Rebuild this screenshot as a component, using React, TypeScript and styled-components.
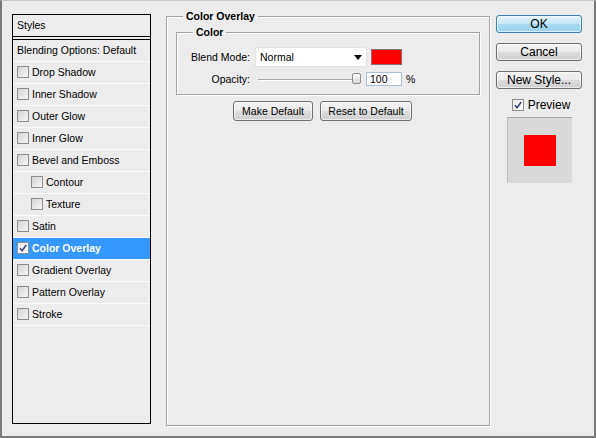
import styled, { createGlobalStyle } from "styled-components";

const GlobalStyle = createGlobalStyle`
  html, body {
    margin: 0;
    padding: 0;
    background: #ececec;
  }
  body {
    font-family: "Liberation Sans", Arial, sans-serif;
    font-size: 10.5px;
    color: #000;
  }
`;

const Window = styled.div`
  box-sizing: border-box;
  width: 596px;
  height: 438px;
  background: #ececec;
  border-top: 1px solid #c9c9c9;
  border-left: 2px solid #7b7b7b;
  border-right: 2px solid #7b7b7b;
  border-bottom: 2px solid #7b7b7b;
  padding: 9px 0 0 10px;
  display: flex;
  align-items: flex-start;
`;

/* ---------- left list ---------- */

const StylesPanel = styled.div`
  box-sizing: border-box;
  margin-top: 4px;
  width: 139px;
  height: 410px;
  border: 1px solid #000;
  display: flex;
  flex-direction: column;
`;

const PanelHeader = styled.div`
  height: 21px;
  line-height: 20px;
  padding-left: 4px;
  border-bottom: 1px solid #000;
`;

const HeaderRule = styled.div`
  height: 2px;
  border-bottom: 1px solid #000;
`;

const Row = styled.div<{ $indent?: boolean; $active?: boolean }>`
  box-sizing: border-box;
  display: flex;
  align-items: center;
  gap: 3px;
  height: 22px;
  padding-left: ${(p) => (p.$indent ? "18px" : "4px")};
  padding-bottom: 1px;
  border-bottom: 1px solid #fbfbfb;
  background: ${(p) => (p.$active ? "#3399ff" : "transparent")};
  color: ${(p) => (p.$active ? "#fff" : "#000")};
  font-weight: ${(p) => (p.$active ? "bold" : "normal")};
  white-space: nowrap;
`;

const Box = styled.span<{ $on?: boolean }>`
  box-sizing: border-box;
  flex: 0 0 auto;
  width: 12px;
  height: 12px;
  border: 1px solid #8e8e8e;
  background: ${(p) =>
    p.$on ? "linear-gradient(135deg, #e9e9e9, #ffffff)" : "linear-gradient(135deg, #d4d4d4, #f6f6f6)"};
  display: flex;
  align-items: center;
  justify-content: center;
`;

const Check = ({ on }: { on?: boolean }) => (
  <Box $on={on}>
    {on && (
      <svg width="10" height="10" viewBox="0 0 10 10">
        <path d="M2 5.2 L4.1 7.6 L8.2 2" fill="none" stroke="#3a4a78" strokeWidth="1.6" />
      </svg>
    )}
  </Box>
);

const effects: { label: string; indent?: boolean; on?: boolean }[] = [
  { label: "Drop Shadow" },
  { label: "Inner Shadow" },
  { label: "Outer Glow" },
  { label: "Inner Glow" },
  { label: "Bevel and Emboss" },
  { label: "Contour", indent: true },
  { label: "Texture", indent: true },
  { label: "Satin" },
  { label: "Color Overlay", on: true },
  { label: "Gradient Overlay" },
  { label: "Pattern Overlay" },
  { label: "Stroke" },
];

/* ---------- middle settings ---------- */

const Settings = styled.fieldset`
  box-sizing: border-box;
  margin: 0 0 0 15px;
  padding: 0 9px;
  min-width: 0;
  width: 324px;
  height: 416px;
  border: 1px solid #a3a3a3;
  box-shadow: inset 1px 1px 0 #fff, 1px 1px 0 #fff;
`;

const Legend = styled.legend<{ $shift: number }>`
  margin-left: ${(p) => p.$shift}px;
  padding: 0 3px;
  font-weight: bold;
  line-height: 13px;
`;

const ColorGroup = styled.fieldset`
  box-sizing: border-box;
  margin: 3px 0 0;
  padding: 0;
  min-width: 0;
  border: 1px solid #a3a3a3;
  box-shadow: inset 1px 1px 0 #fff, 1px 1px 0 #fff;
`;

const Form = styled.div`
  display: grid;
  grid-template-columns: 73px auto;
  column-gap: 5px;
  row-gap: 5px;
  align-items: center;
  padding: 8px 0 8px;
`;

const Label = styled.span`
  text-align: right;
`;

const Controls = styled.div`
  display: flex;
  align-items: center;
  gap: 4px;
`;

const Select = styled.div`
  box-sizing: border-box;
  width: 112px;
  height: 20px;
  background: #fff;
  border: 1px solid #e2e2e2;
  display: flex;
  align-items: center;
  justify-content: space-between;
  padding: 0 4px 0 4px;
`;

const Swatch = styled.div`
  box-sizing: border-box;
  width: 31px;
  height: 16px;
  background: #ff0000;
  border: 1px solid #8a7070;
`;

const Slider = styled.div`
  position: relative;
  width: 107px;
  height: 13px;
`;

const Track = styled.div`
  position: absolute;
  left: 3px;
  right: 8px;
  top: 6px;
  height: 1px;
  background: #a8a8a8;
  box-shadow: 0 1px 0 #fff;
`;

const Thumb = styled.div`
  position: absolute;
  right: 1px;
  top: 0;
  box-sizing: border-box;
  width: 9px;
  height: 11px;
  border: 1px solid #8c8c8c;
  border-radius: 2px;
  background: linear-gradient(#fafafa, #d6d6d6);
`;

const NumberField = styled.div`
  box-sizing: border-box;
  width: 36px;
  height: 14px;
  background: #fff;
  border: 1px solid #a9bfd6;
  padding-left: 3px;
  line-height: 12px;
`;

const ButtonRow = styled.div`
  display: flex;
  gap: 7px;
  margin: 6px 0 0 57px;
`;

const Button = styled.div<{ $w?: number; $h?: number; $default?: boolean }>`
  box-sizing: border-box;
  width: ${(p) => (p.$w ? `${p.$w}px` : "100%")};
  height: ${(p) => p.$h ?? 20}px;
  display: flex;
  align-items: center;
  justify-content: center;
  border: 1px solid ${(p) => (p.$default ? "#3c7fb1" : "#707070")};
  border-radius: 3px;
  background: ${(p) =>
    p.$default
      ? "linear-gradient(#e3f4fc 0%, #c4e5f6 50%, #a9daf2 51%, #9ad3ef 100%)"
      : "linear-gradient(#f2f2f2 0%, #ebebeb 50%, #dddddd 51%, #cfcfcf 100%)"};
  box-shadow: inset 0 0 0 1px rgba(255, 255, 255, 0.6);
  white-space: nowrap;
`;

/* ---------- right column ---------- */

const Side = styled.div`
  margin: 5px 0 0 6px;
  width: 86px;
  display: flex;
  flex-direction: column;
  align-items: center;
  gap: 10px;
  font-size: 12px;
`;

const PreviewToggle = styled.div`
  display: flex;
  align-items: center;
  gap: 4px;
  margin-top: -1px;
  margin-left: 4px;
`;

const PreviewBox = styled.div`
  box-sizing: border-box;
  width: 65px;
  height: 66px;
  margin-left: 1px;
  margin-top: -5px;
  background: #d9d9d9;
  border-top: 1px solid #a6a6a6;
  border-left: 1px solid #bdbdbd;
  display: flex;
  align-items: center;
  justify-content: center;
`;

const PreviewSquare = styled.div`
  width: 32px;
  height: 31px;
  background: #ff0000;
`;

export default function App() {
  return (
    <>
      <GlobalStyle />
      <Window>
        <StylesPanel>
          <PanelHeader>Styles</PanelHeader>
          <HeaderRule />
          <Row>Blending Options: Default</Row>
          {effects.map((e) => (
            <Row key={e.label} $indent={e.indent} $active={e.on}>
              <Check on={e.on} />
              {e.label}
            </Row>
          ))}
        </StylesPanel>

        <Settings>
          <Legend $shift={7}>Color Overlay</Legend>
          <ColorGroup>
            <Legend $shift={16}>Color</Legend>
            <Form>
              <Label>Blend Mode:</Label>
              <Controls>
                <Select>
                  <span>Normal</span>
                  <svg width="8" height="5" viewBox="0 0 8 5">
                    <path d="M0 0 H8 L4 5 Z" fill="#000" />
                  </svg>
                </Select>
                <Swatch />
              </Controls>
              <Label>Opacity:</Label>
              <Controls>
                <Slider>
                  <Track />
                  <Thumb />
                </Slider>
                <NumberField>100</NumberField>
                <span>%</span>
              </Controls>
            </Form>
          </ColorGroup>
          <ButtonRow>
            <Button $w={80}>Make Default</Button>
            <Button $w={92}>Reset to Default</Button>
          </ButtonRow>
        </Settings>

        <Side>
          <Button $h={18} $default>OK</Button>
          <Button $h={18}>Cancel</Button>
          <Button $h={18}>New Style...</Button>
          <PreviewToggle>
            <Check on />
            Preview
          </PreviewToggle>
          <PreviewBox>
            <PreviewSquare />
          </PreviewBox>
        </Side>
      </Window>
    </>
  );
}
